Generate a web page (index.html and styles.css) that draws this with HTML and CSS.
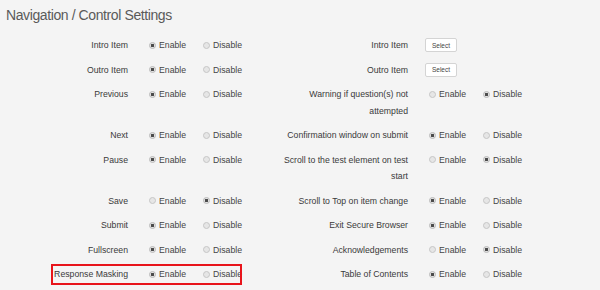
FILE: index.html
```html
<!DOCTYPE html>
<html lang="en">
<head>
  <meta charset="UTF-8" />
  <title>Navigation / Control Settings</title>
  <link rel="stylesheet" href="styles.css">
</head>
<body>
  <div class="page">
    <h1>Navigation / Control Settings</h1>

    <div class="settings">
      <div class="row">
        <div class="pair">
          <div class="label">Intro Item</div>
          <div class="options">
            <label class="opt"><input type="radio" name="intro" checked> Enable</label>
            <label class="opt"><input type="radio" name="intro"> Disable</label>
          </div>
        </div>
        <div class="pair">
          <div class="label">Intro Item</div>
          <div class="options"><button class="select-btn">Select</button></div>
        </div>
      </div>

      <div class="row">
        <div class="pair">
          <div class="label">Outro Item</div>
          <div class="options">
            <label class="opt"><input type="radio" name="outro" checked> Enable</label>
            <label class="opt"><input type="radio" name="outro"> Disable</label>
          </div>
        </div>
        <div class="pair">
          <div class="label">Outro Item</div>
          <div class="options"><button class="select-btn">Select</button></div>
        </div>
      </div>

      <div class="row">
        <div class="pair">
          <div class="label">Previous</div>
          <div class="options">
            <label class="opt"><input type="radio" name="prev" checked> Enable</label>
            <label class="opt"><input type="radio" name="prev"> Disable</label>
          </div>
        </div>
        <div class="pair">
          <div class="label">Warning if question(s) not attempted</div>
          <div class="options">
            <label class="opt"><input type="radio" name="warn"> Enable</label>
            <label class="opt"><input type="radio" name="warn" checked> Disable</label>
          </div>
        </div>
      </div>

      <div class="row">
        <div class="pair">
          <div class="label">Next</div>
          <div class="options">
            <label class="opt"><input type="radio" name="next" checked> Enable</label>
            <label class="opt"><input type="radio" name="next"> Disable</label>
          </div>
        </div>
        <div class="pair">
          <div class="label">Confirmation window on submit</div>
          <div class="options">
            <label class="opt"><input type="radio" name="confirm" checked> Enable</label>
            <label class="opt"><input type="radio" name="confirm"> Disable</label>
          </div>
        </div>
      </div>

      <div class="row">
        <div class="pair">
          <div class="label">Pause</div>
          <div class="options">
            <label class="opt"><input type="radio" name="pause" checked> Enable</label>
            <label class="opt"><input type="radio" name="pause"> Disable</label>
          </div>
        </div>
        <div class="pair">
          <div class="label">Scroll to the test element on test start</div>
          <div class="options">
            <label class="opt"><input type="radio" name="scrollstart"> Enable</label>
            <label class="opt"><input type="radio" name="scrollstart" checked> Disable</label>
          </div>
        </div>
      </div>

      <div class="row">
        <div class="pair">
          <div class="label">Save</div>
          <div class="options">
            <label class="opt"><input type="radio" name="save"> Enable</label>
            <label class="opt"><input type="radio" name="save" checked> Disable</label>
          </div>
        </div>
        <div class="pair">
          <div class="label">Scroll to Top on item change</div>
          <div class="options">
            <label class="opt"><input type="radio" name="scrolltop" checked> Enable</label>
            <label class="opt"><input type="radio" name="scrolltop"> Disable</label>
          </div>
        </div>
      </div>

      <div class="row">
        <div class="pair">
          <div class="label">Submit</div>
          <div class="options">
            <label class="opt"><input type="radio" name="submit" checked> Enable</label>
            <label class="opt"><input type="radio" name="submit"> Disable</label>
          </div>
        </div>
        <div class="pair">
          <div class="label">Exit Secure Browser</div>
          <div class="options">
            <label class="opt"><input type="radio" name="exit" checked> Enable</label>
            <label class="opt"><input type="radio" name="exit"> Disable</label>
          </div>
        </div>
      </div>

      <div class="row">
        <div class="pair">
          <div class="label">Fullscreen</div>
          <div class="options">
            <label class="opt"><input type="radio" name="full" checked> Enable</label>
            <label class="opt"><input type="radio" name="full"> Disable</label>
          </div>
        </div>
        <div class="pair">
          <div class="label">Acknowledgements</div>
          <div class="options">
            <label class="opt"><input type="radio" name="ack"> Enable</label>
            <label class="opt"><input type="radio" name="ack" checked> Disable</label>
          </div>
        </div>
      </div>

      <div class="row">
        <div class="pair marked">
          <div class="label">Response Masking</div>
          <div class="options">
            <label class="opt"><input type="radio" name="mask" checked> Enable</label>
            <label class="opt"><input type="radio" name="mask"> Disable</label>
          </div>
        </div>
        <div class="pair">
          <div class="label">Table of Contents</div>
          <div class="options">
            <label class="opt"><input type="radio" name="toc" checked> Enable</label>
            <label class="opt"><input type="radio" name="toc"> Disable</label>
          </div>
        </div>
      </div>
    </div>
  </div>
</body>
</html>
```

FILE: styles.css
```css
body {
  margin: 0;
  background: #f4f4f4;
  color: #333333;
  font-family: "Liberation Sans", Arial, sans-serif;
}

.page {
  padding: 5px 0 0 12px;
}

h1 {
  margin: 0 0 8px -6px;
  font-size: 14px;
  line-height: 20px;
  font-weight: normal;
  letter-spacing: -0.4px;
  color: #5a5a5a;
}

.row {
  display: grid;
  grid-template-columns: 264px 1fr;
}

.pair {
  display: flex;
  align-items: flex-start;
  padding: 4px 0;
  font-size: 8.7px;
  line-height: 16.5px;
}

.pair + .pair .label {
  width: 132px;
}

.pair.marked {
  position: relative;
}

/* red annotation frame around the masked setting */
.pair.marked::after {
  content: "";
  position: absolute;
  left: 39px;
  top: 2px;
  width: 187px;
  height: 17px;
  border: 2px solid #e8141b;
}

.label {
  width: 116px;
  flex: none;
  text-align: right;
  color: #3a3a3a;
}

.options {
  display: flex;
  align-items: center;
  height: 16.5px;
  padding-left: 17px;
}

.opt {
  display: inline-flex;
  align-items: center;
  margin-right: 13px;
  color: #444444;
}

.opt input {
  appearance: none;
  -webkit-appearance: none;
  width: 7px;
  height: 7px;
  margin: 0 3px 0 4px;
  border: 1px solid #c6c6c6;
  border-radius: 50%;
  background: #e6e6e6;
}

.opt input:checked {
  background: radial-gradient(circle, #4a4a4a 0 1.4px, #e2e2e2 1.8px);
  border-color: #b8b8b8;
}

.select-btn {
  width: 32px;
  height: 14px;
  padding: 0;
  border: 1px solid #d4d4d4;
  border-radius: 2px;
  background: #ffffff;
  font-family: "Liberation Sans", Arial, sans-serif;
  font-size: 6.5px;
  color: #444444;
}
```
